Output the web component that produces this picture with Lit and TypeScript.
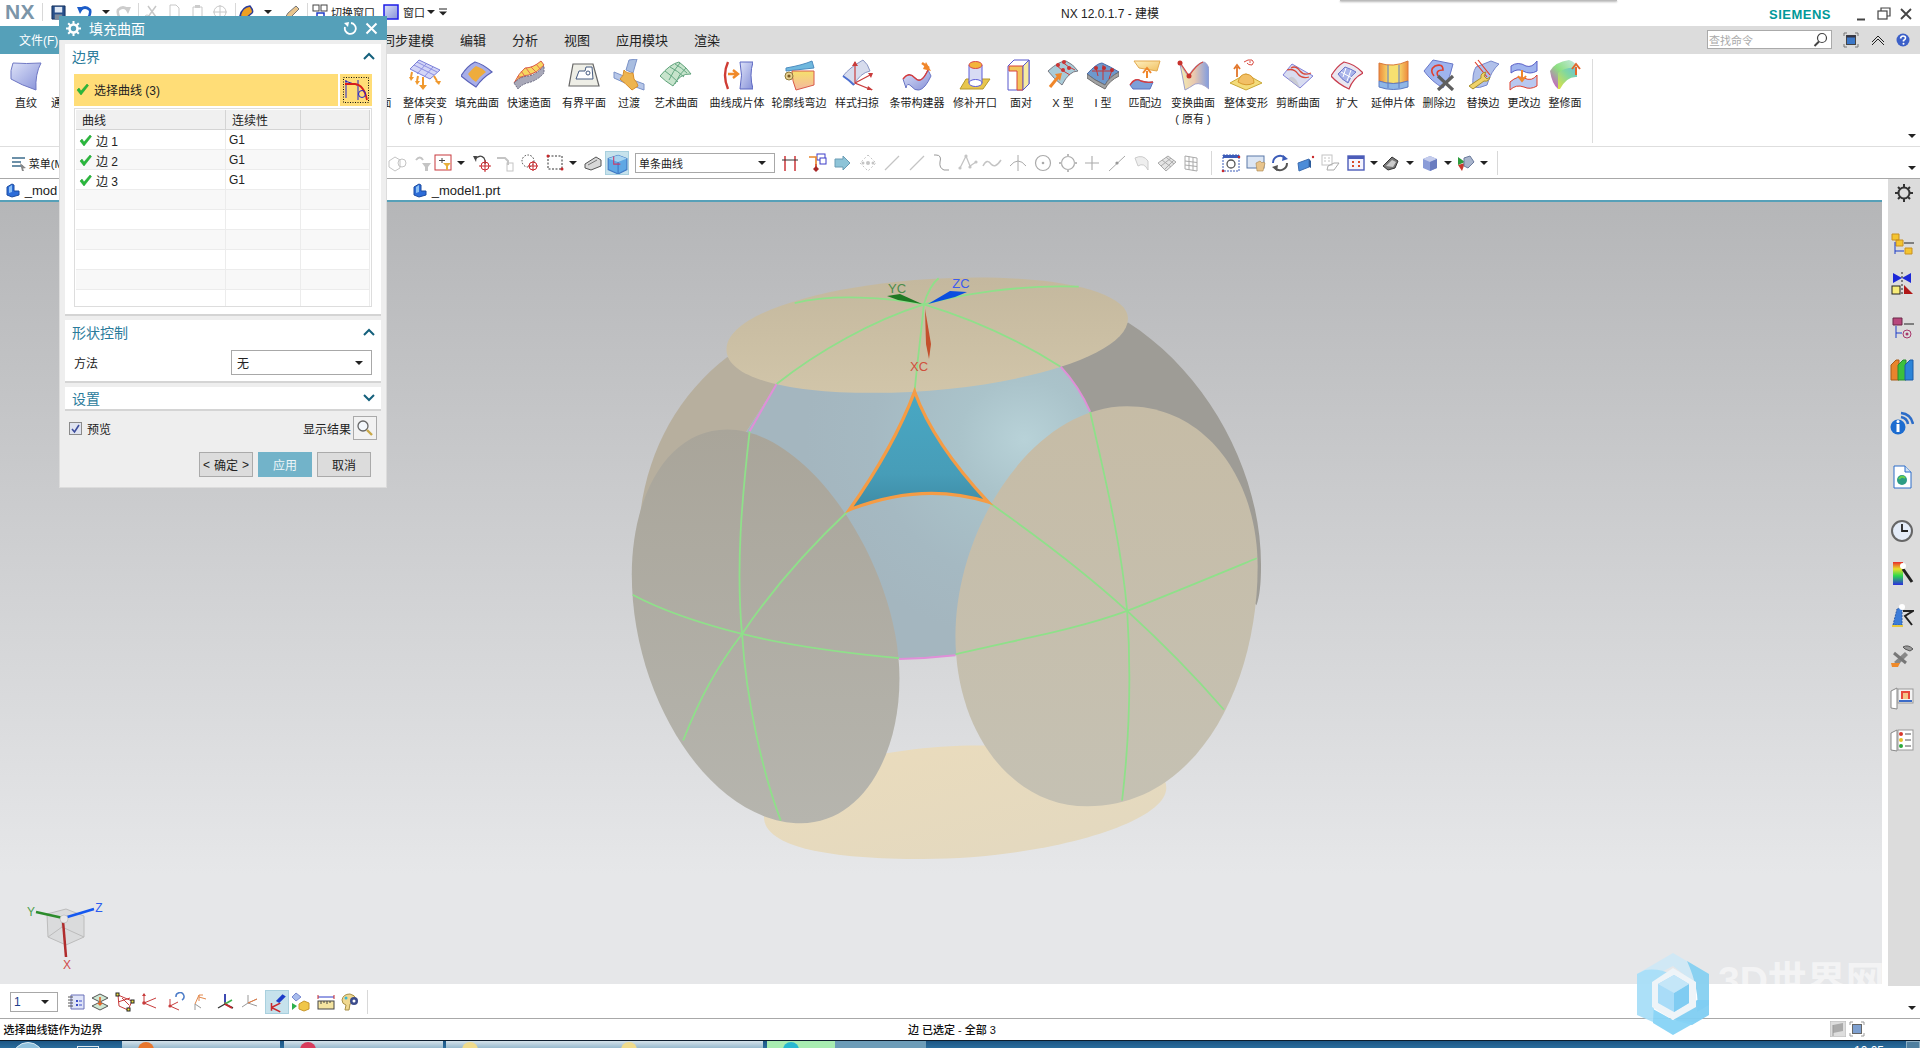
import { LitElement, html, css, svg } from "lit";
import { customElement } from "lit/decorators.js";

type Slot = { c: number; w: number; t: unknown };

// flex row whose children sit at given centre x values
function row(items: Slot[]) {
  let right = 0;
  return items.map((it) => {
    const left = it.c - it.w / 2;
    const m = left - right;
    right = left + it.w;
    return html`<div class="slot" style="margin-left:${m}px;width:${it.w}px">${it.t}</div>`;
  });
}

const box = (size: number, vb: number, body: unknown) =>
  html`<svg class="ic" width=${size} height=${size} viewBox="0 0 ${vb} ${vb}">${body}</svg>`;
const dd = html`<span class="dd"></span>`;
const sep = html`<span class="vsep"></span>`;

/* ---------- ribbon icons, 32 box ---------- */
const rib = {
  ruled: svg`<path d="M3 4Q16 5 31 4Q25 15 26 31Q11 26 1 20Q0 11 3 4Z" fill="url(#gb)" stroke="#6f78c4"/>`,
  global: svg`<path d="M1 10L10 1L31 11L21 20Z" fill="#d3d5f7" stroke="#7a7fd8"/><path d="M8 3L28 13M5 6L25 16M17 5L8 15M24 8L15 18" stroke="#8d90e2" fill="none"/><path d="M3 13L2 18M14 18V27M25 17L28 22M9 17L8 22" stroke="#f0992e" stroke-width="2" fill="none"/><path d="M0 18h5l-3 4zM10 26h8l-4 5zM26 22h6l-2 4zM6 22h5l-3 4z" fill="#f0992e"/>`,
  fill: svg`<path d="M0 17Q6 7 14 3Q22 5 31 13Q21 19 15 28Q7 23 0 17Z" fill="#a8aee8" stroke="#5a62b8" stroke-width="1.200"/><path d="M7 15Q12 9 15 7Q21 9 25 13Q19 17 15 23Q10 20 7 15Z" fill="#eeac3c"/>`,
  quick: svg`<path d="M1 24Q8 16 16 16Q24 14 31 6L28 2Q20 9 12 9Q6 14 1 24Z" fill="#f6d660" stroke="#d85a4a"/><path d="M8 12L14 20M13 9L19 17M18 8L24 14M23 5L28 11M4 18H25" stroke="#e6674e" fill="none"/><path d="M1 24Q8 17 16 17Q24 15 31 7L31 14Q24 22 14 24Q8 26 5 30Z" fill="#a8a8b8" stroke="#6d6d84" stroke-dasharray="2 1"/>`,
  bounded: svg`<path d="M5 5H25L31 27H1Z" fill="#eeeee6" stroke="#666" stroke-width="1.200"/><path d="M8 20L11 12H17L18 8H24L25 20Z" fill="#fff" stroke="#455a80"/><circle cx="20" cy="14" r="2" fill="none" stroke="#455a80"/>`,
  blend: svg`<path d="M1 13L13 18L12 24L1 19Z" fill="#b7c7e8" stroke="#7c93c8"/><path d="M20 21L31 25V31L20 27Z" fill="#b7c7e8" stroke="#7c93c8"/><path d="M16 1L24 0L20 14L13 11Z" fill="#a8bde0" stroke="#7c93c8"/><path d="M11 11Q14 15 20 14L21 20Q24 23 25 27L19 31Q12 24 7 20Q11 17 11 11Z" fill="#edb44f" stroke="#d88c28"/>`,
  studio: svg`<path d="M0 17Q10 5 19 3Q27 9 31 15Q20 14 13 27Q5 22 0 17Z" fill="#c7e4cc" stroke="#5fa27a"/><path d="M5 12Q12 17 18 23M10 8Q18 12 24 18M15 5Q22 9 27 14M9 21Q13 12 20 4M15 25Q19 15 26 9" stroke="#64a882" fill="none"/>`,
  cloth: svg`<path d="M7 3Q1 16 7 30" fill="none" stroke="#cf3c34" stroke-width="2.400"/><path d="M7 15h8M12 11l5 4-5 4" stroke="#f08a2a" stroke-width="2.400" fill="none"/><path d="M19 3H32Q28 16 32 30H19Q22 16 19 3Z" fill="url(#gb)" stroke="#5d68c2"/>`,
  flange: svg`<path d="M3 9Q20 6 29 2L31 9L3 12Z" fill="#6fb8de" stroke="#4d8cc0"/><path d="M9 12H31V26L13 31Q9 22 9 12Z" fill="url(#gy)" stroke="#d85a4a"/><circle cx="6" cy="17" r="4" fill="#e8d090" stroke="#8e7a3a"/><circle cx="6" cy="17" r="1.600" fill="#7a5a24"/>`,
  styled: svg`<path d="M2 17Q8 9 22 1Q27 5 29 12Q19 14 13 26Q7 20 2 17Z" fill="#d7dced" stroke="#8a96c4"/><path d="M2 17Q8 21 13 26" stroke="#4c6fd0" stroke-width="2" fill="none"/><path d="M14 3V24L31 31M14 24L31 15" stroke="#c93c3c" stroke-width="1.200" fill="none"/><path d="M11 7l3-5 3 5zM27 14l5 0-2 5zM27 27l5 4-6 0z" fill="#c93c3c"/>`,
  strip: svg`<path d="M2 20Q8 12 14 19Q20 26 27 11L30 17Q24 30 18 31Q14 32 10 27Q6 23 5 29Z" fill="url(#gb)" stroke="#6a76c4"/><path d="M2 20Q8 12 14 19Q20 26 27 11" stroke="#d83c3c" stroke-width="1.400" fill="none"/><path d="M21 4L28 9" stroke="#f0862a" stroke-width="2.500"/><path d="M25 3L30 12L22 10Z" fill="#f0862a"/>`,
  patch: svg`<path d="M7 20H31L24 30H1Z" fill="#e8c64e" stroke="#b89a2a"/><path d="M10 6V24H23V6" fill="#d8dcf4" stroke="#5d5dd8"/><ellipse cx="16.500" cy="24" rx="6.500" ry="3.500" fill="#fff" stroke="#5d5dd8"/><ellipse cx="16.500" cy="6" rx="6.500" ry="3.500" fill="#f3b43a" stroke="#d84a4a"/>`,
  facing: svg`<path d="M3 7L9 1H24V25L18 31H3Z" fill="none" stroke="#5757cc"/><path d="M4 7H18V31H12V12H4Z" fill="#f1c65c" stroke="#d8433c"/><path d="M18 7L24 1V25L18 31Z" fill="#f7eaa0" stroke="#5757cc"/>`,
  xform: svg`<path d="M1 12Q12 2 19 2Q26 5 31 12Q22 12 15 26Q7 20 1 12Z" fill="#a8cbd8" stroke="#7a7a84"/><path d="M9 6Q15 12 23 16M15 3Q21 8 28 11" stroke="#c83c3c" fill="none"/><circle cx="11" cy="6" r="2" fill="#cc3434"/><circle cx="17" cy="3" r="2" fill="#cc3434"/><circle cx="16" cy="11" r="2" fill="#cc3434"/><circle cx="22" cy="9" r="2" fill="#cc3434"/><path d="M3 28L12 17" stroke="#f0862a" stroke-width="3"/><path d="M8 15L15 14L13 22Z" fill="#f0862a"/>`,
  iform: svg`<path d="M0 15Q10 4 15 4Q24 8 32 13Q22 18 18 26Q7 21 0 15Z" fill="#6e98cc" stroke="#4c6aa8"/><path d="M0 15V19Q8 25 18 30Q22 22 32 17V13Q22 18 18 26Q7 21 0 15Z" fill="#a2a2a2" stroke="#6f6f6f"/><path d="M9 9L11 17M16 6L16 21M25 11L22 20M5 12L26 12" stroke="#c83434" fill="none"/><circle cx="9" cy="9" r="2" fill="#c02e2e"/><circle cx="17" cy="9" r="2" fill="#c02e2e"/><circle cx="25" cy="11" r="2" fill="#c02e2e"/>`,
  match: svg`<path d="M5 2H31L28 12L10 9Z" fill="url(#gy2)" stroke="#e2a950"/><path d="M18 19V12M14 14l4-5 4 5" stroke="#f0862a" stroke-width="2" fill="none"/><path d="M1 26Q6 18 12 22Q20 24 24 23L21 30H4Z" fill="#7d9fd8" stroke="#5a70c0"/><path d="M1 26Q6 18 12 22Q18 24 24 23" stroke="#d83c3c" stroke-width="1.400" fill="none"/>`,
  trans: svg`<path d="M3 5L11 17Q20 4 26 3Q30 3 32 10V30Q24 23 18 25Q12 29 8 31Q6 20 3 5Z" fill="url(#gyb)" stroke="#a0a0c8"/><path d="M4 5L12 17Q20 5 26 3" stroke="#d8463c" stroke-width="1.200" fill="none"/><circle cx="3" cy="4" r="2.500" fill="#c8322c"/><circle cx="12" cy="17" r="2.500" fill="#c8322c"/>`,
  deform: svg`<path d="M0 24L16 15L32 24L16 31Z" fill="#f4dc7a" stroke="#c8a838"/><path d="M8 23Q10 15 16 15Q24 16 24 24Q16 28 8 23Z" fill="#f2c066" stroke="#d89a2e"/><path d="M7 18V8M4 10l3-4 3 4" stroke="#e2762a" stroke-width="1.800" fill="none"/><path d="M14 3Q18 0 22 1Q25 3 22 6Q18 6 17 4" fill="none" stroke="#d8463c"/><circle cx="20" cy="3" r=".8" fill="#d8463c"/>`,
  trim: svg`<path d="M1 16L10 5L31 17L18 29Z" fill="#d8dcf0" stroke="#8080d8"/><path d="M9 9Q14 6 18 12Q22 17 29 14" fill="none" stroke="#d84a3c" stroke-width="1.300"/><path d="M5 11Q12 9 16 15Q20 20 27 18" fill="none" stroke="#d84a3c" stroke-width="1.300"/><path d="M6 20Q12 13 18 29" fill="#c0c0c0" opacity=".6"/>`,
  enlarge: svg`<path d="M0 17Q6 7 13 3Q24 5 32 14Q22 19 18 30Q7 25 0 17Z" fill="#eae6f0" stroke="#c83c4c" stroke-width="1.200"/><path d="M7 15Q12 10 14 8Q20 10 25 13Q19 17 17 24Q10 20 7 15Z" fill="#a9b4ea" stroke="#6a74c8"/><path d="M10 13L21 19M15 9L12 18M20 11L16 22" stroke="#fff" fill="none"/>`,
  extend: svg`<path d="M2 4Q16 9 31 2V22Q16 27 2 22Z" fill="url(#gor)" stroke="#d8783a"/><path d="M2 22Q16 27 31 22V28Q16 33 2 28Z" fill="#8fb6e6" stroke="#5d7cc4"/><path d="M11 6V29M22 6V29" stroke="#5d7cc4" fill="none"/>`,
  delEdge: svg`<path d="M1 12L10 1L30 5Q28 18 20 29Q8 22 1 12Z" fill="#9fb4ee" stroke="#6a78c8"/><path d="M11 17Q6 11 12 7Q20 4 20 11Q12 11 15 17" fill="none" stroke="#e0402e" stroke-width="1.600"/><path d="M15 17L30 31M30 17L15 31" stroke="#5f5f5f" stroke-width="3.200"/>`,
  repEdge: svg`<path d="M6 28Q5 14 9 8L24 2L32 5Q24 12 20 26Q12 30 6 28Z" fill="#b0c0ea" stroke="#7888cc"/><path d="M11 1L23 16M8 3L20 18" stroke="#e0402e" stroke-width="1.200"/><path d="M2 27L6 30L17 22Q22 23 23 18L20 20L17 17L19 13Q13 14 14 19Z" fill="#f0d36a" stroke="#a88f2c"/>`,
  chgEdge: svg`<path d="M3 7Q10 2 18 7Q24 9 29 2V12Q22 16 15 12Q9 9 3 14Z" fill="#9fb4ee" stroke="#5a60c8"/><path d="M2 23Q10 16 16 19Q24 23 29 16V27Q22 31 16 28Q8 25 2 31Z" fill="#b8c8f0" stroke="#e0402e"/><path d="M14 11V20M10 17l4 5 4-5" stroke="#f0862a" stroke-width="2" fill="none"/>`,
  retrim: svg`<path d="M1 12Q6 3 20 1Q27 3 28 9L10 14L9 30Q3 25 1 12Z" fill="url(#grb)"/><path d="M9 14Q16 8 28 9V18Q18 17 11 30L9 30Z" fill="url(#grn)"/><path d="M27 16V8M23 10l4-5 4 5" stroke="#e2662a" stroke-width="2" fill="none"/>`,
};

const ribbon: [number, string, unknown, string?][] = [
  [26, "直纹", rib.ruled],
  [62, "通过", ""], // its icon sits behind the dialog
  [371, "N边曲面", rib.fill],
  [425, "整体突变", rib.global, "( 原有 )"],
  [477, "填充曲面", rib.fill],
  [529, "快速造面", rib.quick],
  [584, "有界平面", rib.bounded],
  [629, "过渡", rib.blend],
  [676, "艺术曲面", rib.studio],
  [737, "曲线成片体", rib.cloth],
  [799, "轮廓线弯边", rib.flange],
  [857, "样式扫掠", rib.styled],
  [917, "条带构建器", rib.strip],
  [975, "修补开口", rib.patch],
  [1021, "面对", rib.facing],
  [1063, "X 型", rib.xform],
  [1103, "I 型", rib.iform],
  [1145, "匹配边", rib.match],
  [1193, "变换曲面", rib.trans, "( 原有 )"],
  [1246, "整体变形", rib.deform],
  [1298, "剪断曲面", rib.trim],
  [1347, "扩大", rib.enlarge],
  [1393, "延伸片体", rib.extend],
  [1439, "删除边", rib.delEdge],
  [1483, "替换边", rib.repEdge],
  [1524, "更改边", rib.chgEdge],
  [1565, "整修面", rib.retrim],
];

/* ---------- small toolbar icons, 20 box ---------- */
const G = "#c4c4c4";
const tb = {
  boxOff: svg`<path d="M2 8L8 4L13 7V15L8 18L2 14Z" fill="none" stroke="${G}"/><circle cx="15" cy="10" r="4" fill="none" stroke="${G}"/>`,
  funnelOff: svg`<path d="M3 7Q7 2 10 7" fill="none" stroke="${G}" stroke-width="2"/><path d="M9 10H18L15 14V18H12V14Z" fill="${G}"/>`,
  redBox: svg`<rect x="1" y="2" width="16" height="15" fill="#fff" stroke="#c8383c"/><path d="M8 5V10M5 7.500H11" stroke="#444"/><path d="M9 10H17L14 13V17H12V13Z" fill="#e8b03c"/>`,
  undoX: svg`<path d="M3 6Q8 1 12 5Q14 8 13 11" fill="none" stroke="#444" stroke-width="1.300"/><path d="M1 3L5 3L4 9Z" fill="#444"/><circle cx="13" cy="13" r="4" fill="none" stroke="#c8282c"/><path d="M13 7V19M7 13H19" stroke="#c8282c"/>`,
  gearOff: svg`<path d="M2 5H10L13 8V12" fill="none" stroke="${G}" stroke-width="2"/><rect x="12" y="10" width="6" height="8" fill="none" stroke="${G}"/>`,
  dotX: svg`<circle cx="8" cy="8" r="6" fill="none" stroke="#444" stroke-dasharray="1.500 1.500"/><circle cx="13" cy="13" r="4" fill="none" stroke="#c8282c"/><path d="M13 8V18M8 13H18" stroke="#c8282c"/>`,
  dashRect: svg`<rect x="3" y="3" width="14" height="13" fill="none" stroke="#333" stroke-dasharray="2 1.500"/><circle cx="3" cy="3" r="1.500" fill="#c8282c"/><circle cx="17" cy="16" r="1.500" fill="#c8282c"/>`,
  cham: svg`<path d="M2 11L13 4L18 7V13L8 17L2 15Z" fill="#d8d8d8" stroke="#555"/><path d="M5 12L14 7" stroke="#777"/>`,
  cube: svg`<path d="M2 6L11 3L19 6V16L11 20L2 16Z" fill="#5fa8e4" stroke="#3f78c4"/><path d="M2 6L11 9L19 6L11 3Z" fill="#a8d4f0"/><path d="M11 9V20" stroke="#3f78c4"/><path d="M7 4V11H13" stroke="#c83c6c" fill="none"/>`,
  hBar: svg`<path d="M5 3V18M15 3V18" stroke="#c8282c" stroke-width="1.400"/><path d="M2 7H18" stroke="#333"/>`,
  flow: svg`<rect x="10" y="1" width="8" height="6" fill="#fff" stroke="#3c3cc8"/><rect x="13" y="5" width="6" height="6" fill="#fff" stroke="#3c3cc8"/><path d="M2 4H9L9 15" stroke="#e8842a" stroke-width="1.600" fill="none"/><path d="M9 11V18" stroke="#c8282c"/><path d="M9 13L12 16L9 19L6 16Z" fill="#a82828"/>`,
  arrow: svg`<path d="M3 6H11V3L18 10L11 17V14H3Z" fill="#8ec4d8" stroke="#6a9cb4"/>`,
  dotsOff: svg`<path d="M10 2L18 10L10 18L2 10Z" fill="none" stroke="${G}" stroke-dasharray="2 2"/><circle cx="10" cy="10" r="2" fill="${G}"/><circle cx="5" cy="10" r="1.500" fill="${G}"/><circle cx="15" cy="10" r="1.500" fill="${G}"/>`,
  lineOff: svg`<path d="M3 17L17 3" stroke="${G}" stroke-width="1.300"/>`,
  sOff: svg`<path d="M5 2Q11 2 9 9Q8 15 13 17H18" fill="none" stroke="#999"/><path d="M5 2L3 2" stroke="#999"/>`,
  polyOff: svg`<path d="M2 15L8 3L12 13L18 9" fill="none" stroke="${G}" stroke-width="1.300"/><circle cx="8" cy="3" r="1.600" fill="${G}"/><circle cx="12" cy="14" r="1.600" fill="${G}"/><circle cx="18" cy="9" r="1.600" fill="${G}"/><circle cx="2" cy="15" r="1.600" fill="${G}"/>`,
  waveOff: svg`<path d="M1 13Q5 5 9 11Q13 16 19 7" fill="none" stroke="${G}" stroke-width="1.500"/>`,
  arcOff: svg`<path d="M10 2V18M2 13Q10 3 18 13" fill="none" stroke="#aaa"/>`,
  circOff: svg`<circle cx="10" cy="10" r="7.500" fill="none" stroke="#aaa" stroke-width="1.200"/><circle cx="10" cy="10" r="1.300" fill="#aaa"/>`,
  ringOff: svg`<circle cx="10" cy="10" r="6.500" fill="none" stroke="#aaa" stroke-width="1.200"/><path d="M10 1V4M10 16V19M1 10H4M16 10H19" stroke="#bbb" stroke-width="2"/>`,
  plusOff: svg`<path d="M10 3V17M3 10H17" stroke="#aaa" stroke-width="1.100"/>`,
  lineDot: svg`<path d="M2 18L18 3" stroke="#aaa"/><circle cx="10" cy="10" r="1.600" fill="#999"/>`,
  curveOff: svg`<path d="M4 5Q12 1 17 8V17Q13 9 7 13Z" fill="#eee" stroke="#ccc"/>`,
  meshOff: svg`<path d="M1 10L11 3L19 9L9 18Z" fill="#e4e4e4" stroke="#aaa"/><path d="M5 7L14 14M9 4L17 11M4 13L14 5M8 16L17 7" stroke="#aaa"/>`,
  gridOff: svg`<path d="M4 3L16 5V18L4 16Z" fill="none" stroke="#aaa"/><path d="M8 3.500V17M12 4.200V17.500M4 8L16 9.500M4 12L16 13.500" stroke="#aaa"/>`,
  sepZoom: svg`<rect x="2" y="2" width="16" height="16" fill="#fff" stroke="#3c5cb8" stroke-dasharray="2 1"/><rect x="2" y="2" width="16" height="3" fill="#3c5cb8"/><circle cx="10" cy="11" r="4" fill="none" stroke="#555" stroke-width="1.300"/><circle cx="2" cy="18" r="1.300" fill="#c8282c"/><circle cx="18" cy="4" r="1.300" fill="#c8282c"/>`,
  pan: svg`<rect x="1" y="3" width="17" height="12" fill="#dce6f4" stroke="#5a78a8"/><path d="M10 10L11 18H17L19 10L17 9L16 10L14 8L12 9Z" fill="#e8c48c" stroke="#a8844c" stroke-width=".6"/>`,
  rotate: svg`<path d="M3 10A7 7 0 0 1 15 5" fill="none" stroke="#3c5cb8" stroke-width="2"/><path d="M17 10A7 7 0 0 1 5 15" fill="none" stroke="#555" stroke-width="2"/><path d="M13 2L18 6L12 8Z" fill="#3c5cb8"/><path d="M7 18L2 14L8 12Z" fill="#555"/>`,
  persp: svg`<path d="M2 10L13 6V14L3 18Z" fill="#4c8cd8" stroke="#3c6cb0"/><path d="M13 6L15 8V15L13 14Z" fill="#2c5c9c"/><circle cx="17" cy="4" r="1.200" fill="#c8282c"/>`,
  tblOff: svg`<rect x="2" y="2" width="10" height="10" fill="none" stroke="${G}"/><path d="M4 5H6M8 5H10M4 8H6M8 8H10" stroke="${G}"/><path d="M8 13L14 10H19L14 17H7Z" fill="none" stroke="#aaa"/>`,
  layout: svg`<rect x="2" y="3" width="16" height="14" fill="#f4f4ff" stroke="#4c5cb8" stroke-width="1.400"/><rect x="2" y="3" width="16" height="3" fill="#4c5cb8"/><path d="M6 8h2v2h-2zM12 8h2v2h-2zM6 12h2v2h-2zM12 12h2v2h-2z" fill="#d84a2c"/>`,
  shade: svg`<path d="M1 13L10 4L16 8L13 15L6 17Z" fill="#777" stroke="#333"/><path d="M4 13L10 7L14 9L11 14Z" fill="#ccc"/>`,
  cubeB: svg`<path d="M3 6L10 3L17 6V15L10 18L3 15Z" fill="#8a9cd8"/><path d="M3 6L10 9L17 6L10 3Z" fill="#c4ccec"/><path d="M10 9L17 6V15L10 18Z" fill="#6a7cc0"/>`,
  play: svg`<path d="M2 4L9 9L2 12Z" fill="#2c9c3c"/><path d="M2 12L9 10L6 18Z" fill="#c8382c"/><path d="M8 5L14 3L18 9L12 15L8 13Z" fill="#a8b4cc" stroke="#6a7a9c"/>`,
};

const tools: Slot[] = [
  [397, tb.boxOff], [423, tb.funnelOff], [444, tb.redBox], [482, tb.undoX], [505, tb.gearOff],
  [530, tb.dotX], [555, tb.dashRect], [593, tb.cham],
].map(([c, b]) => ({ c: c as number, w: 22, t: box(20, 20, b) }));

const toolsB: [number, unknown][] = [
  [790, tb.hBar], [817, tb.flow], [842, tb.arrow], [868, tb.dotsOff], [892, tb.lineOff],
  [917, tb.lineOff], [941, tb.sOff], [968, tb.polyOff], [992, tb.waveOff], [1018, tb.arcOff],
  [1043, tb.circOff], [1068, tb.ringOff], [1092, tb.plusOff], [1117, tb.lineDot], [1141, tb.curveOff],
  [1167, tb.meshOff], [1191, tb.gridOff],
];
const toolsC: [number, unknown][] = [
  [1231, tb.sepZoom], [1256, tb.pan], [1280, tb.rotate], [1306, tb.persp], [1330, tb.tblOff],
  [1356, tb.layout],
];

const bottomIcons: [number, unknown][] = [
  [76, svg`<path d="M5 3H18V17H5Z" fill="#dfe4f8" stroke="#6a70b8"/><path d="M2 5H7M2 8H7M2 11H7M2 14H7" stroke="#555"/><path d="M10 8h2v2h-2zM10 12h2v2h-2z" fill="#3c4cc8"/><path d="M13 9h3M13 13h3" stroke="#3c4cc8"/>`],
  [100, svg`<path d="M2 6L10 2L18 6L10 10Z" fill="#cfe8d4" stroke="#555"/><path d="M2 14L10 10L18 14L10 18Z" fill="#cfe8d4" stroke="#555"/><path d="M10 5V12" stroke="#e2662a" stroke-width="1.600"/><path d="M7 11H13L10 14Z" fill="#e2662a"/>`],
  [125, svg`<path d="M3 3L17 9L13 18L4 14Z" fill="none" stroke="#c83c3c"/><path d="M7 6L14 13M3 10L15 6" stroke="#c83c3c"/><rect x="1" y="1" width="3" height="3" fill="#f0e040" stroke="#222"/><rect x="16" y="8" width="3" height="3" fill="#f0e040" stroke="#222"/><rect x="12" y="16" width="3" height="3" fill="#f0e040" stroke="#222"/>`],
  [149, svg`<path d="M5 2V11M5 11L17 6M5 11L17 16" stroke="#c83c3c" fill="none"/><path d="M3 4L5 1L7 4Z" fill="#c83c3c"/><circle cx="5" cy="11" r="1.800" fill="#c83c3c"/>`],
  [175, svg`<path d="M5 7V14M5 14L13 10M5 14L14 18" stroke="#c83c3c" fill="none"/><circle cx="5" cy="14" r="1.600" fill="#c83c3c"/><path d="M11 5A4 4 0 1 1 17 8" fill="none" stroke="#4c7cc8" stroke-width="1.500"/>`],
  [200, svg`<path d="M5 12V18M5 12L11 16" stroke="#999" fill="none"/><path d="M5 12L9 3H13M9 3V9M9 5L16 7" stroke="#e2884c" fill="none"/>`],
  [225, svg`<path d="M10 2V12M10 12L3 16M10 12L18 16" fill="none" stroke-width="1.400" stroke="#333"/><path d="M10 2V10" stroke="#2c3cc8" stroke-width="1.500"/><path d="M10 12L17 8" stroke="#3cb04c" stroke-width="1.500"/><path d="M10 12L17 16" stroke="#c8282c" stroke-width="2"/>`],
  [250, svg`<path d="M8 3V11M8 11L2 15M8 11L17 7M8 11L17 14" stroke="#999" fill="none"/><path d="M8 11L17 7" stroke="#e8783c"/>`],
  [300, svg`<path d="M6 1L11 5L6 9L2 5Z" fill="#a8bcec" stroke="#7888d0"/><path d="M2 11L7 14L2 18Z" fill="#2cb04c"/><path d="M9 12L14 9L19 11V17L14 19L9 17Z" fill="#f0c648" stroke="#c8982c"/>`],
  [326, svg`<rect x="2" y="9" width="16" height="8" fill="#f4e4a0" stroke="#444"/><path d="M5 9V12M8 9V11M11 9V12M14 9V11" stroke="#444"/><path d="M2 5H18" stroke="#2c3cc8"/><path d="M2 3V7M18 3V7" stroke="#c8282c"/>`],
  [350, svg`<path d="M2 8Q3 2 10 2Q15 3 16 7Q13 12 10 12L9 18H5L6 13Q2 12 2 8Z" fill="#f0d890" stroke="#a89048"/><circle cx="14" cy="9" r="4" fill="#3c4c8c"/><circle cx="14" cy="9" r="1.500" fill="#fff"/><circle cx="6" cy="6" r="1.500" fill="#38b8d8"/>`],
];

/* right rail: [gap above, icon body] */
const rail: [number, unknown][] = [
  [2, svg`<circle cx="14" cy="12" r="5.500" fill="none" stroke="#333" stroke-width="2"/><path d="M14 3v3M14 18v3M5 12h3M20 12h3M8 6l2 2M18 16l2 2M20 6l-2 2M10 16l-2 2" stroke="#333" stroke-width="2"/>`],
  [27, svg`<path d="M2 2H9V8H2ZM6 8H13V14H6Z" fill="#f4c430" stroke="#c89020"/><path d="M15 16H22V22H15Z" fill="#f4c430" stroke="#c89020"/><path d="M5 10V22M5 19H14" stroke="#1c3cc8" fill="none"/><path d="M14 11H24" stroke="#222"/>`],
  [15, svg`<path d="M3 2L12 7L21 2V12L12 7L3 12Z" fill="#1c28d8"/><path d="M12 1V24" stroke="#222" stroke-dasharray="2 2"/><rect x="2" y="15" width="8" height="8" fill="#f8ec78" stroke="#222"/><path d="M14 14L23 23H14Z" fill="#b01818"/>`],
  [21, svg`<path d="M3 2H12V9H3Z" fill="#b8487c" stroke="#6a2848"/><path d="M6 10V22M6 17H12" stroke="#1c3cc8" fill="none"/><path d="M14 8H24" stroke="#222"/><circle cx="17" cy="18" r="4" fill="none" stroke="#a8386c"/><circle cx="17" cy="18" r="1.500" fill="#a8386c"/>`],
  [18, svg`<path d="M1 7L6 2H9V22H1Z" fill="#e8842c" stroke="#a85c18"/><path d="M8 7L13 2H16V22H8Z" fill="#3cc03c" stroke="#2c8c2c"/><path d="M15 7L20 2H23V22H15Z" fill="#2c84d8" stroke="#1c5ca8"/>`],
  [29, svg`<path d="M11 6Q17 7 18 13M11 2Q21 3 23 13" fill="none" stroke="#2c6cc8" stroke-width="2.500"/><circle cx="8" cy="16" r="7.500" fill="#1c6cd0"/><path d="M6.500 13h3v8h-3z" fill="#fff"/><circle cx="8" cy="10.500" r="1.500" fill="#fff"/>`],
  [30, svg`<path d="M4 1H15L21 7V23H4Z" fill="#fff" stroke="#2c6cc8"/><path d="M15 1V7H21" fill="#cfe0f4" stroke="#2c6cc8"/><circle cx="12" cy="15" r="5" fill="#2c9c84"/><path d="M9 14Q12 10 15 13" stroke="#6cd04c" stroke-width="2" fill="none"/>`],
  [30, svg`<circle cx="12" cy="12" r="10" fill="#e4ecf8" stroke="#666" stroke-width="2"/><path d="M12 5V12H18" stroke="#222" stroke-width="1.800" fill="none"/>`],
  [18, svg`<rect x="3" y="1" width="10" height="23" fill="url(#grain)"/><path d="M13 8L22 21" stroke="#222" stroke-width="3"/><circle cx="13" cy="5" r="3" fill="#fff"/>`],
  [18, svg`<path d="M3 22L7 6L12 4V22Z" fill="#3c7cd8" stroke="#2c5ca8" stroke-dasharray="2 1"/><path d="M2 23H13" stroke="#e8c83c" stroke-width="2"/><path d="M13 8H23L15 13L22 22" fill="none" stroke="#222" stroke-width="2"/><circle cx="12" cy="4" r="3" fill="#fff"/>`],
  [16, svg`<path d="M4 19L15 9L18 12L8 22Z" fill="#888"/><path d="M13 4Q18 1 23 6L20 8L15 6Z" fill="#999" stroke="#555"/><path d="M1 20H10L8 24H2Z" fill="#f08a2a"/><path d="M4 10L16 20" stroke="#777" stroke-width="3"/>`],
  [19, svg`<path d="M1 5L7 2V23L1 22Z" fill="#fff" stroke="#888"/><rect x="8" y="3" width="15" height="14" fill="#f4f4f4" stroke="#999"/><path d="M11 5H20V13H11Z" fill="#e8483c"/><path d="M13 7H18V13H13Z" fill="#f4c488"/><path d="M9 15H22" stroke="#3c6cc8" stroke-width="2"/>`],
  [18, svg`<path d="M1 5L7 2V23L1 22Z" fill="#fff" stroke="#888"/><rect x="8" y="2" width="15" height="20" fill="#fff" stroke="#999"/><circle cx="11" cy="6" r="2" fill="#d8382c"/><circle cx="11" cy="12" r="2" fill="#e8c02c"/><circle cx="11" cy="18" r="2" fill="#2ca83c"/><path d="M15 6H21M15 12H21M15 18H21" stroke="#555"/>`],
];

const check = html`<svg class="ic" width="13" height="13" viewBox="0 0 13 13"><path d="M1 7L3 5L5 8L11 1L12.500 2.500L5 12Z" fill="#28b83c" stroke="#1c9c2c" stroke-width=".5"/></svg>`;
const chevron = (up: boolean) =>
  html`<svg class="ic" width="12" height="8" viewBox="0 0 12 8"><path d=${up ? "M1 7L6 2L11 7" : "M1 1L6 6L11 1"} fill="none" stroke="#14607c" stroke-width="2"/></svg>`;
const partTab = html`<svg class="ic" width="15" height="15" viewBox="0 0 15 15"><path d="M2 4L7 1L9 2V8L14 8V12L7 14L2 12Z" fill="#2c6cd8" stroke="#1c4ca0"/><path d="M4 4L7 2V9L4 10Z" fill="#8cc0f4"/></svg>`;

const tableRows = [
  ["边 1", "G1"], ["边 2", "G1"], ["边 3", "G1"],
  ["", ""], ["", ""], ["", ""], ["", ""], ["", ""], ["", ""],
];

@customElement("app-root")
export class AppRoot extends LitElement {
  static styles = css`
    :host {
      display: block;
      width: 1920px;
      height: 1048px;
      font-family: "Liberation Sans", "Noto Sans CJK SC", sans-serif;
      font-size: 12px;
      color: #222;
    }
    .page {
      position: relative;
      width: 1920px;
      height: 1048px;
      overflow: hidden;
      background: #fff;
      display: flex;
      flex-direction: column;
    }
    .ic { display: block; }
    .row { display: flex; align-items: center; flex: none; }
    .slot {
      flex: none;
      display: flex;
      justify-content: center;
      align-items: center;
      white-space: nowrap;
    }
    .dd {
      display: block;
      width: 0;
      height: 0;
      border-left: 4px solid transparent;
      border-right: 4px solid transparent;
      border-top: 4px solid #222;
    }
    .vsep { display: block; width: 1px; height: 24px; background: #d8d8d8; }

    .title { height: 26px; padding-bottom: 2px; box-sizing: border-box; }
    .nx { font-size: 21px; font-weight: 700; color: #7b95a8; letter-spacing: .5px; }
    .siemens { font-size: 13px; font-weight: 700; color: #009999; letter-spacing: .5px; margin-top: 4px; }
    .winbtn { margin-top: 3px; }
    .t11 { font-size: 11px; }
    .t12 { font-size: 12px; }

    .menu { height: 28px; background: #dcdcdc; font-size: 13px; color: #222; padding-bottom: 1px; box-sizing: border-box; }
    .filetab {
      height: 28px;
      width: 100%;
      margin-bottom: -1px;
      background: #55a0b9;
      color: #fff;
      font-size: 12px;
      display: flex;
      align-items: center;
      padding: 0 0 2px 19px;
      box-sizing: border-box;
    }
    .search {
      width: 100%;
      height: 19px;
      box-sizing: border-box;
      background: #fff;
      border: 1px solid #aaa;
      color: #aaa;
      font-size: 11px;
      display: flex;
      align-items: center;
      justify-content: space-between;
      padding: 0 3px 0 1px;
    }

    .ribbon {
      height: 93px;
      box-sizing: border-box;
      border-bottom: 1px solid #dedede;
      align-items: flex-start;
      position: relative;
    }
    .ritem {
      flex: none;
      width: 60px;
      display: flex;
      flex-direction: column;
      align-items: center;
      font-size: 11px;
      line-height: 16px;
      padding-top: 5px;
      white-space: nowrap;
    }
    .ritem svg { margin-bottom: 4px; }
    .rsep { flex: none; width: 1px; height: 84px; margin-top: 5px; background: #dcdcdc; }
    .overflow { position: absolute; right: 4px; bottom: 8px; }

    .tools { height: 32px; box-sizing: border-box; border-bottom: 1px solid #a8a8a8; position: relative; }
    .combo {
      box-sizing: border-box;
      background: #fff;
      border: 1px solid #a8a8a8;
      display: flex;
      align-items: center;
      justify-content: space-between;
      padding: 0 8px 0 3px;
      width: 100%;
      height: 20px;
      font-size: 11px;
    }
    .sel { background: #c6e2ec; outline: 1px solid #a9d0de; }

    .work { flex: 1; display: flex; min-height: 0; }
    .main { flex: 1; display: flex; flex-direction: column; min-width: 0; }
    .tabs { height: 21px; flex: none; font-size: 13px; padding-top: 1px; box-sizing: border-box; }
    .tab { display: flex; align-items: center; gap: 5px; }
    .canvas {
      flex: none;
      width: 1882px;
      height: 784px;
      box-sizing: border-box;
      border-top: 2px solid #56a0b8;
      background: linear-gradient(#b5b6b8, #e6e7e9 86%);
    }
    .canvas svg { display: block; }
    .rail {
      flex: none;
      width: 32px;
      box-sizing: border-box;
      padding-right: 4px;
      background: #dcdcdc;
      display: flex;
      flex-direction: column;
      align-items: center;
    }

    .btm { height: 33px; box-sizing: border-box; border-bottom: 1px solid #a8a8a8; position: relative; }
    .status { height: 21px; font-size: 11px; font-weight: 500; color: #111; padding-bottom: 2px; box-sizing: border-box; }

    .taskbar {
      height: 8px;
      flex: none;
      border-top: 1px solid #0c1c2c;
      box-sizing: border-box;
      background: linear-gradient(#1c5684, #2a6c9c);
      display: flex;
      overflow: hidden;
      position: relative;
    }
    .orb {
      position: absolute;
      left: 12px;
      top: 1px;
      width: 32px;
      height: 32px;
      border-radius: 50%;
      background: #8fc0dc;
      border: 1px solid #dcecf4;
      box-sizing: border-box;
    }
    .deskrect {
      position: absolute;
      left: 77px;
      top: 5px;
      width: 22px;
      height: 8px;
      border: 1px solid #dfe8ee;
      box-sizing: border-box;
    }
    .task {
      flex: none;
      height: 8px;
      margin-left: 4px;
      background: linear-gradient(#d4e2ea, #8fb4ca);
      display: flex;
      padding-left: 16px;
      box-sizing: border-box;
    }
    .dot { width: 16px; height: 16px; margin-top: 1px; border-radius: 50%; }
    .clock {
      position: absolute;
      left: 1854px;
      top: 3px;
      color: #fff;
      font-size: 12px;
      line-height: 14px;
    }
    .desk {
      position: absolute;
      right: 0;
      top: 0;
      width: 14px;
      height: 8px;
      background: #4f7f9f;
      border: 1px solid #8fb0c4;
      box-sizing: border-box;
    }

    /* dialog floats over the main window */
    .dialog {
      position: absolute;
      left: 59px;
      top: 16px;
      width: 328px;
      height: 472px;
      box-sizing: border-box;
      background: #eee;
      border: 1px solid #dcdcdc;
      border-top: 0;
      display: flex;
      flex-direction: column;
      font-size: 12px;
    }
    .dtitle {
      height: 24px;
      margin: 0 -1px;
      flex: none;
      background: #55a0b9;
      color: #fff;
      font-size: 14px;
      display: flex;
      align-items: center;
      padding: 0 9px 0 7px;
      gap: 8px;
    }
    .dtitle .grow { flex: 1; }
    .sect {
      background: #fff;
      margin: 4px 5px 0 5px;
      flex: none;
      box-sizing: border-box;
      border-bottom: 2px solid #d4d4d4;
    }
    .shead {
      height: 26px;
      box-sizing: border-box;
      display: flex;
      align-items: center;
      justify-content: space-between;
      padding: 0 6px 2px 7px;
      color: #2a7b9b;
      font-size: 14px;
    }
    .pick { display: flex; gap: 2px; margin: 4px 9px 2px 9px; height: 32px; }
    .pickrow {
      flex: 1;
      background: #ffdd77;
      display: flex;
      align-items: center;
      gap: 5px;
      padding: 0 0 1px 2px;
    }
    .pickbtn {
      width: 32px;
      background: #ffdd77;
      padding: 3px;
      box-sizing: border-box;
    }
    .table {
      margin: 0 9px 7px 9px;
      height: 199px;
      overflow: hidden;
      box-sizing: border-box;
      border: 1px solid #ddd;
      padding: 1px 1px 0 1px;
      display: grid;
      grid-template-columns: 150px 75px 1fr;
      grid-auto-rows: 20px;
    }
    .cell {
      display: flex;
      align-items: center;
      gap: 4px;
      box-sizing: border-box;
      border-bottom: 1px solid #ececec;
      border-right: 1px solid #ececec;
      padding: 1px 0 0 3px;
    }
    .cell.h { background: #f0f0f0; border-bottom: 1px solid #d4d4d4; border-right: 1px solid #d4d4d4; padding: 0 0 0 6px; }
    .cell.odd { background: #f8f8f8; }
    .ctrl {
      display: flex;
      justify-content: space-between;
      align-items: center;
      margin: 4px 9px 6px 9px;
      height: 25px;
    }
    .ctrl .combo { width: 141px; height: 25px; padding-left: 5px; font-size: 12px; }
    .preview {
      display: flex;
      align-items: center;
      justify-content: space-between;
      margin: 5px 9px 0 9px;
      height: 24px;
    }
    .preview .l, .preview .r { display: flex; align-items: center; gap: 5px; }
    .preview .r { gap: 2px; }
    .chk {
      width: 13px;
      height: 13px;
      box-sizing: border-box;
      border: 1px solid #8a8a8a;
      background: #dfe3f0;
    }
    .glass {
      width: 24px;
      height: 24px;
      box-sizing: border-box;
      border: 1px solid #aaa;
      background: #f2f2f2;
      display: flex;
      align-items: center;
      justify-content: center;
    }
    .btns { display: flex; gap: 5px; margin: 12px 0 0 139px; }
    .btn {
      flex: none;
      width: 54px;
      height: 25px;
      box-sizing: border-box;
      background: #dcdcdc;
      border: 1px solid #aaa;
      display: flex;
      align-items: center;
      justify-content: center;
    }
    .btn.ok { justify-content: space-between; padding: 0 3px; }
    .btn.apply { background: #72b3c9; border-color: #72b3c9; color: #eef6f8; }

    .topshadow {
      position: absolute;
      left: 1340px;
      top: 0;
      width: 277px;
      height: 1px;
      background: #bbb;
      box-shadow: 0 1px 2px #999;
    }
    .mark { position: absolute; left: 1636px; top: 952px; }
    .marktext {
      position: absolute;
      left: 1718px;
      top: 958px;
      font-size: 39px;
      line-height: 46px;
      font-weight: 700;
      color: rgba(255, 255, 255, .55);
      white-space: nowrap;
    }
  `;

  private scene() {
    const green = [
      "M722 118C640 100 500 90 415 115", "M722 118C800 95 950 65 1090 72", "M722 118C730 85 745 60 757 50",
      "M722 118C600 160 470 240 372 325", "M722 118C850 160 960 220 1047 280", "M722 118C715 200 705 280 700 345",
      "M308 448C290 620 275 800 290 975", "M290 975C300 1150 340 1340 382 1460", "M30 873C110 920 200 950 290 975",
      "M290 975C400 1005 540 1025 663 1038", "M290 975C360 860 450 750 545 652", "M290 975C230 1060 190 1140 150 1252",
      "M1117 397C1150 560 1190 730 1205 915", "M1205 915C1215 1080 1210 1250 1193 1408", "M797 1028C940 990 1080 965 1205 915",
      "M1205 915C1310 870 1420 820 1513 778", "M875 632C990 720 1110 820 1205 915", "M1205 915C1290 1000 1370 1090 1435 1172",
    ];
    return html`<svg width="1882" height="782" viewBox="0 203 1882 782">
      <defs>
        <linearGradient id="ltop" x1="0" y1="0" x2="0" y2="1"><stop offset="0" stop-color="#c4b89e"/><stop offset="1" stop-color="#d1c5a9"/></linearGradient>
        <linearGradient id="lleft" x1="0" y1="0" x2="0" y2="1"><stop offset="0" stop-color="#a9a59a"/><stop offset="1" stop-color="#b6b5ae"/></linearGradient>
        <linearGradient id="lright" x1="0" y1="0" x2="0" y2="1"><stop offset="0" stop-color="#c6bca6"/><stop offset="1" stop-color="#c5c1b3"/></linearGradient>
        <linearGradient id="lbot" x1="0" y1="0" x2="1" y2="1"><stop offset="0" stop-color="#ebdcbc"/><stop offset="1" stop-color="#e2d8c0"/></linearGradient>
        <linearGradient id="ltri" x1="0" y1="0" x2="0" y2="1"><stop offset="0" stop-color="#49a8c4"/><stop offset=".7" stop-color="#479db8"/><stop offset="1" stop-color="#3d8aa4"/></linearGradient>
        <radialGradient id="lblue" gradientUnits="userSpaceOnUse" cx="960" cy="470" r="520"><stop offset="0" stop-color="#b8d2d8"/><stop offset=".3" stop-color="#aac3ca"/><stop offset=".7" stop-color="#a5b9c2"/><stop offset="1" stop-color="#a4b6bf"/></radialGradient>
      </defs>
      <g transform="translate(620 260) scale(.42088 .3846)">
        <path d="M342 1450C342 1350 600 1265 850 1265C1100 1265 1298 1290 1298 1375C1298 1470 1000 1560 720 1560C500 1560 342 1530 342 1450Z" fill="url(#lbot)"/>
        <path d="M255 255C130 360 55 520 45 700L300 450L372 325Z" fill="#b7af9e"/>
        <path d="M1207 165C1400 300 1525 560 1523 800C1523 840 1520 880 1512 900L1117 397L1047 280Z" fill="#9e9c96"/>
        <path d="M372 325L1047 280Q1090 330 1117 397L1000 1000L797 1030L663 1040L500 1000L300 450Z" fill="url(#lblue)"/>
        <path d="M255 443C110 443 28 620 28 820C28 1150 220 1467 430 1467C570 1467 664 1300 664 1090C664 800 450 443 255 443Z" fill="url(#lleft)"/>
        <path d="M1205 383C980 383 797 700 797 980C797 1230 930 1423 1110 1423C1370 1423 1515 1110 1515 800C1515 570 1390 383 1205 383Z" fill="url(#lright)"/>
        <path d="M253 235C253 130 550 48 850 48C1060 48 1207 90 1207 155C1207 260 900 348 600 348C400 348 253 310 253 235Z" fill="url(#ltop)"/>
        ${green.map((d) => svg`<path d=${d} fill="none" stroke="#8fe08a" stroke-width="1.800" vector-effect="non-scaling-stroke"/>`)}
        <path d="M372 325L308 448M1047 280Q1090 330 1117 397M663 1040Q730 1038 797 1030" fill="none" stroke="#e08fd8" stroke-width="2" vector-effect="non-scaling-stroke"/>
        <path d="M700 345Q745 480 875 632Q720 578 545 652Q650 490 700 345Z" fill="url(#ltri)" stroke="#f59c45" stroke-width="3.200" stroke-linejoin="miter" vector-effect="non-scaling-stroke"/>
      </g>
      <path d="M922 305L900 295L887 297L898 301Z" fill="#1f7a24"/>
      <path d="M928 305L950 292L967 293L955 298Z" fill="#0a4ee0"/>
      <path d="M925 310L926 345L929 360L931 345Z" fill="#c4502c"/>
      <g font-family="Liberation Sans" font-size="13" text-anchor="middle">
        <text x="897" y="294" fill="#4c8c4c">YC</text>
        <text x="961" y="289" fill="#3c5cf0">ZC</text>
        <text x="919" y="372" fill="#d0503c">XC</text>
      </g>
      <g>
        <path d="M47 915L66 910L84 917L84 938L66 946L48 938Z" fill="#d2d3d4" fill-opacity=".6" stroke="#bcbcbc"/>
        <path d="M48 938L62 928L84 938M62 919V928" fill="none" stroke="#bcbcbc"/>
        <path d="M63 919L36 913" stroke="#2c8c2c" stroke-width="2.500"/>
        <path d="M64 919L94 910" stroke="#1458f0" stroke-width="2.500"/>
        <path d="M63 922L66 958" stroke="#b02c2c" stroke-width="2.500"/>
        <circle cx="64" cy="920" r="4" fill="#e8e8e8" stroke="#aaa" stroke-width=".5"/>
        <g font-family="Liberation Sans" font-size="12" text-anchor="middle">
          <text x="31" y="917" fill="#4ca04c">Y</text>
          <text x="99" y="913" fill="#2c5cf0">Z</text>
          <text x="67" y="970" fill="#d04c4c">X</text>
        </g>
      </g>
    </svg>`;
  }

  render() {
    const smallRow = (list: [number, unknown][], size = 20) =>
      list.map(([c, b]) => ({ c, w: 22, t: box(size, 20, b) }));
    return html`
      <svg width="0" height="0" style="position:absolute">
        <defs>
          <linearGradient id="gb" x1="0" y1="0" x2="1" y2="1"><stop offset="0" stop-color="#dde2f8"/><stop offset="1" stop-color="#8590d8"/></linearGradient>
          <linearGradient id="gy" x1="0" y1="0" x2="0" y2="1"><stop offset="0" stop-color="#f6e06c"/><stop offset="1" stop-color="#f4b8a0"/></linearGradient>
          <linearGradient id="gy2" x1="0" y1="0" x2="1" y2="1"><stop offset="0" stop-color="#fff0c0"/><stop offset="1" stop-color="#f0c060"/></linearGradient>
          <linearGradient id="gyb" x1="0" y1="0" x2="1" y2="0"><stop offset="0" stop-color="#f4eeb0"/><stop offset=".5" stop-color="#e8c8b0"/><stop offset="1" stop-color="#7f9ce0"/></linearGradient>
          <linearGradient id="gor" x1="0" y1="0" x2="1" y2="0"><stop offset="0" stop-color="#ee8a3c"/><stop offset=".35" stop-color="#f6e070"/><stop offset=".65" stop-color="#f6e070"/><stop offset="1" stop-color="#ee8a3c"/></linearGradient>
          <linearGradient id="grb" x1="0" y1="1" x2="1" y2="0"><stop offset="0" stop-color="#d83cd8"/><stop offset=".5" stop-color="#8ce080"/><stop offset="1" stop-color="#c8e8e8"/></linearGradient>
          <linearGradient id="grn" x1="0" y1="1" x2="1" y2="0"><stop offset="0" stop-color="#e0e040"/><stop offset=".6" stop-color="#80d8a0"/><stop offset="1" stop-color="#6cc0d8"/></linearGradient>
          <linearGradient id="grain" x1="0" y1="0" x2="0" y2="1"><stop offset="0" stop-color="#e82c2c"/><stop offset=".3" stop-color="#e8e02c"/><stop offset=".6" stop-color="#2cd84c"/><stop offset="1" stop-color="#2c2ce0"/></linearGradient>
        </defs>
      </svg>
      <div class="page">
        <div class="row title">
          ${row([
            { c: 20, w: 36, t: html`<span class="nx">NX</span>` },
            { c: 42, w: 1, t: html`<span class="vsep" style="height:18px"></span>` },
            { c: 58, w: 16, t: box(15, 16, svg`<path d="M1 1H15V15H1Z" fill="#28508c" stroke="#14305c"/><rect x="4" y="2" width="8" height="6" fill="#dfe8f4"/><rect x="4" y="10" width="8" height="5" fill="#7f8c9c"/>`) },
            { c: 85, w: 16, t: box(16, 16, svg`<path d="M3 6Q8 1 13 6Q14 10 11 14" fill="none" stroke="#1c5cc8" stroke-width="2.600"/><path d="M0 3L7 3L3 10Z" fill="#1c5cc8"/>`) },
            { c: 106, w: 8, t: dd },
            { c: 123, w: 16, t: box(16, 16, svg`<path d="M13 6Q8 1 3 6Q2 10 5 14" fill="none" stroke="#ccc" stroke-width="2.600"/><path d="M16 3L9 3L13 10Z" fill="#ccc"/>`) },
            { c: 138, w: 1, t: html`<span class="vsep" style="height:18px"></span>` },
            { c: 152, w: 16, t: box(16, 16, svg`<path d="M4 13L12 2M12 13L4 2" stroke="#c8c8c8" stroke-width="1.500"/><circle cx="3" cy="13" r="2" fill="none" stroke="#c8c8c8"/>`) },
            { c: 175, w: 16, t: box(16, 16, svg`<path d="M3 1H9L12 4V14H3Z" fill="none" stroke="#c8c8c8"/>`) },
            { c: 198, w: 16, t: box(16, 16, svg`<path d="M3 3H12V15H3Z" fill="none" stroke="#c8c8c8"/><rect x="5" y="1" width="5" height="3" fill="#ccc"/>`) },
            { c: 220, w: 16, t: box(16, 16, svg`<circle cx="8" cy="8" r="6" fill="none" stroke="#c8c8c8"/><path d="M8 1V15M1 8H15" stroke="#c8c8c8"/>`) },
            { c: 235, w: 1, t: html`<span class="vsep" style="height:18px"></span>` },
            { c: 247, w: 16, t: box(16, 16, svg`<path d="M1 12Q3 3 11 2Q15 7 13 9L7 14Z" fill="#f0a020" stroke="#2c3c98" stroke-width="1.500"/>`) },
            { c: 268, w: 8, t: dd },
            { c: 292, w: 16, t: box(16, 16, svg`<path d="M1 14L4 9L12 2L15 5L7 13Z" fill="#e8c48c" stroke="#777"/>`) },
            { c: 307, w: 1, t: html`<span class="vsep" style="height:18px"></span>` },
            { c: 320, w: 16, t: box(16, 16, svg`<rect x="1" y="1" width="6" height="6" fill="none" stroke="#444"/><rect x="9" y="1" width="6" height="6" fill="none" stroke="#444"/><rect x="5" y="9" width="7" height="7" fill="none" stroke="#1c3cc8" stroke-width="1.500"/>`) },
            { c: 353, w: 46, t: html`<span class="t11">切换窗口</span>` },
            { c: 391, w: 16, t: box(16, 16, svg`<rect x="1" y="1" width="14" height="14" fill="url(#gb)" stroke="#1c1ce8" stroke-width="1.500"/>`) },
            { c: 414, w: 24, t: html`<span class="t11">窗口</span>` },
            { c: 431, w: 8, t: dd },
            { c: 443, w: 8, t: html`<svg class="ic" width="8" height="8" viewBox="0 0 8 8"><path d="M0 1H8" stroke="#222"/><path d="M0 3.500H8L4 7.500Z" fill="#222"/></svg>` },
            { c: 1110, w: 130, t: html`<span class="t12">NX 12.0.1.7 - 建模</span>` },
            { c: 1800, w: 70, t: html`<span class="siemens">SIEMENS</span>` },
            { c: 1861, w: 10, t: html`<svg class="ic winbtn" width="10" height="14" viewBox="0 0 10 14"><path d="M1 12.500H9" stroke="#444" stroke-width="2"/></svg>` },
            { c: 1884, w: 14, t: html`<svg class="ic winbtn" width="14" height="14" viewBox="0 0 14 14"><rect x="1" y="4" width="9" height="8" fill="#fff" stroke="#444" stroke-width="1.200"/><path d="M4 4V1H13V9H10" fill="none" stroke="#444" stroke-width="1.200"/></svg>` },
            { c: 1906, w: 14, t: html`<svg class="ic winbtn" width="14" height="14" viewBox="0 0 14 14"><path d="M2 2L12 12M12 2L2 12" stroke="#444" stroke-width="1.800"/></svg>` },
          ])}
        </div>

        <div class="row menu">
          ${row([
            { c: 36, w: 72, t: html`<div class="filetab">文件(F)</div>` },
            { c: 408, w: 54, t: "同步建模" },
            { c: 473, w: 28, t: "编辑" },
            { c: 525, w: 28, t: "分析" },
            { c: 577, w: 28, t: "视图" },
            { c: 642, w: 54, t: "应用模块" },
            { c: 707, w: 28, t: "渲染" },
            { c: 1769.500, w: 125, t: html`<div class="search">查找命令<svg class="ic" width="15" height="15" viewBox="0 0 15 15"><circle cx="9" cy="6" r="4.500" fill="#fff" stroke="#444" stroke-width="1.200"/><path d="M6 9.500L1.500 14" stroke="#444" stroke-width="2"/></svg></div>` },
            { c: 1851, w: 16, t: box(16, 16, svg`<path d="M1 4V1H4M12 1H15V4M15 12V15H12M4 15H1V12" fill="none" stroke="#777"/><rect x="3.500" y="3.500" width="9" height="9" fill="#3c78c8" stroke="#444"/><rect x="3.500" y="3.500" width="9" height="2" fill="#334"/>`) },
            { c: 1878, w: 14, t: box(14, 14, svg`<path d="M1 9L7 3L13 9M1 12L7 6L13 12" fill="none" stroke="#222" stroke-width="1"/>`) },
            { c: 1903, w: 14, t: html`<svg class="ic" width="14" height="14" viewBox="0 0 14 14"><circle cx="7" cy="7" r="6.500" fill="#3c60c8"/><path d="M4.500 5.500Q5 3 7 3Q9.500 3 9.500 5Q9.500 6.500 7.500 7.500V8.500" fill="none" stroke="#fff" stroke-width="1.600"/><circle cx="7.500" cy="10.800" r="1" fill="#fff"/></svg>` },
          ])}
        </div>

        <div class="row ribbon">
          ${ribbon.map(([c, label, icon, line2], i) => {
            const prev = i === 0 ? 0 : ribbon[i - 1][0] + 30;
            return html`<div class="ritem" style="margin-left:${c - 30 - prev}px">
              ${box(32, 32, icon)}<span>${label}</span>${line2 ? html`<span>${line2}</span>` : ""}
            </div>`;
          })}
          <div class="rsep" style="margin-left:${1592 - 1595}px"></div>
          <span class="dd overflow"></span>
        </div>

        <div class="row tools">
          ${row([
            { c: 19, w: 18, t: box(16, 16, svg`<path d="M1 3H14M1 7H10M1 11H12" stroke="#3c6c8c" stroke-width="1.500"/><path d="M9 8L15 13L12 13.500L13 16H11L10.500 14Z" fill="#888"/>`) },
            { c: 48, w: 36, t: html`<span class="t11">菜单(M)</span>` },
            ...tools,
            { c: 461, w: 8, t: dd },
            { c: 573, w: 8, t: dd },
            { c: 617, w: 23, t: html`<div class="sel">${box(22, 20, tb.cube)}</div>` },
            { c: 705, w: 140, t: html`<div class="combo">单条曲线<span class="dd"></span></div>` },
            ...smallRow(toolsB),
            { c: 1211, w: 1, t: sep },
            ...smallRow(toolsC),
            { c: 1374, w: 8, t: dd },
            { c: 1392, w: 22, t: box(20, 20, tb.shade) },
            { c: 1410, w: 8, t: dd },
            { c: 1430, w: 22, t: box(20, 20, tb.cubeB) },
            { c: 1448, w: 8, t: dd },
            { c: 1466, w: 22, t: box(20, 20, tb.play) },
            { c: 1484, w: 8, t: dd },
            { c: 1497, w: 1, t: sep },
          ])}
          <span class="dd overflow"></span>
        </div>

        <div class="work">
          <div class="main">
            <div class="row tabs">
              ${row([
                { c: 31, w: 66, t: html`<div class="tab">${partTab}<span>_mod</span></div>` },
                { c: 456, w: 90, t: html`<div class="tab">${partTab}<span>_model1.prt</span></div>` },
              ])}
            </div>
            <div class="canvas">${this.scene()}</div>
          </div>
          <div class="rail">
            ${rail.map(([gap, b]) => html`<div style="margin-top:${gap}px">${box(24, 24, b)}</div>`)}
          </div>
        </div>

        <div class="row btm">
          ${row([
            { c: 34, w: 48, t: html`<div class="combo" style="color:#1c3c8c;font-size:12px">1<span class="dd"></span></div>` },
            ...smallRow(bottomIcons.slice(0, 8)),
            { c: 276.500, w: 23, t: html`<div class="sel">${box(22, 20, svg`<path d="M5 11V18M5 15L13 11M5 15L13 19" stroke="#c8282c" stroke-width="1.400" fill="none"/><path d="M9 9L15 3L18 5L12 11Z" fill="#1c3cc8"/>`)}</div>` },
            ...smallRow(bottomIcons.slice(8)),
            { c: 367, w: 1, t: sep },
          ])}
          <span class="dd overflow"></span>
        </div>

        <div class="row status">
          ${row([
            { c: 53, w: 100, t: "选择曲线链作为边界" },
            { c: 952, w: 110, t: "边 已选定 - 全部 3" },
            { c: 1838, w: 16, t: box(16, 16, svg`<rect width="16" height="16" fill="#ddd" stroke="#bbb"/><path d="M3 4L13 2V10L3 12Z" fill="#aaa"/><path d="M3 4V15" stroke="#999"/>`) },
            { c: 1857, w: 16, t: box(16, 16, svg`<path d="M1 4V1H4M12 1H15V4M15 12V15H12M4 15H1V12" fill="none" stroke="#999"/><rect x="3.500" y="3.500" width="9" height="9" fill="#7ea0d0" stroke="#666"/>`) },
          ])}
        </div>

        <div class="taskbar">
          <div class="orb"></div>
          <div class="deskrect"></div>
          <div class="task" style="margin-left:122px;width:158px"><div class="dot" style="background:#e8762c"></div></div>
          <div class="task" style="width:159px"><div class="dot" style="background:#d83c5c"></div></div>
          <div class="task" style="margin-left:3px;width:159px"><div class="dot" style="background:#f0dc8c"></div></div>
          <div class="task" style="margin-left:0;width:158px"><div class="dot" style="background:#f0dc8c"></div></div>
          <div class="task" style="width:159px;background:linear-gradient(90deg,#a8ecb0 0,#a8ecb0 68px,#6c9cb8 68px)"><div class="dot" style="background:#28b8d0"></div></div>
          <div class="clock">10:05</div>
          <div class="desk"></div>
        </div>

        <div class="dialog">
          <div class="dtitle">
            <svg class="ic" width="15" height="15" viewBox="0 0 15 15"><circle cx="7.500" cy="7.500" r="4" fill="none" stroke="#fff" stroke-width="2.600"/><path d="M7.500 0v3M7.500 12v3M0 7.500h3M12 7.500h3M2.200 2.200l2 2M10.800 10.800l2 2M12.800 2.200l-2 2M4.200 10.800l-2 2" stroke="#fff" stroke-width="2"/></svg>
            <span class="grow">填充曲面</span>
            <svg class="ic" width="14" height="14" viewBox="0 0 14 14"><path d="M8 2A5.500 5.500 0 1 1 2 6" fill="none" stroke="#fff" stroke-width="1.800"/><path d="M1 2L6 1L5 6Z" fill="#fff"/></svg>
            <svg class="ic" width="13" height="13" viewBox="0 0 13 13"><path d="M1.500 1.500L11.500 11.500M11.500 1.500L1.500 11.500" stroke="#fff" stroke-width="2"/></svg>
          </div>

          <div class="sect">
            <div class="shead"><span>边界</span>${chevron(true)}</div>
            <div class="pick">
              <div class="pickrow">${check}<span>选择曲线 (3)</span></div>
              <div class="pickbtn">
                <svg class="ic" width="26" height="26" viewBox="0 0 26 26">
                  <rect x=".5" y=".5" width="25" height="25" fill="none" stroke="#111" stroke-dasharray="1 1.500"/>
                  <path d="M3 3V21M2 4L14 8M15 3V23" stroke="#2222cc" fill="none"/>
                  <path d="M2 7H12Q21 8 24 23" fill="none" stroke="#d81c1c" stroke-width="1.800"/>
                  <circle cx="19" cy="17" r="3.500" fill="none" stroke="#2222cc"/>
                </svg>
              </div>
            </div>
            <div class="table">
              <div class="cell h">曲线</div><div class="cell h">连续性</div><div class="cell h"></div>
              ${tableRows.map(([a, b], i) => {
                const odd = i % 2 === 1 ? "odd" : "";
                return html`
                  <div class="cell ${odd}">${a ? check : ""}<span>${a}</span></div>
                  <div class="cell ${odd}">${b}</div>
                  <div class="cell ${odd}"></div>`;
              })}
            </div>
          </div>

          <div class="sect">
            <div class="shead"><span>形状控制</span>${chevron(true)}</div>
            <div class="ctrl">
              <span>方法</span>
              <div class="combo">无<span class="dd"></span></div>
            </div>
          </div>

          <div class="sect" style="height:24px">
            <div class="shead" style="height:22px;padding-bottom:0"><span>设置</span>${chevron(false)}</div>
          </div>

          <div class="preview">
            <div class="l">
              <div class="chk"><svg class="ic" width="11" height="11" viewBox="0 0 11 11"><path d="M2 6L4.500 9L9 2" fill="none" stroke="#3c4c9c" stroke-width="1.600"/></svg></div>
              <span>预览</span>
            </div>
            <div class="r">
              <span>显示结果</span>
              <div class="glass"><svg class="ic" width="18" height="18" viewBox="0 0 18 18"><circle cx="7" cy="7" r="5" fill="#f4f8fc" stroke="#666" stroke-width="1.300"/><path d="M11 11L16 16" stroke="#c8a848" stroke-width="2.400"/></svg></div>
            </div>
          </div>

          <div class="btns">
            <div class="btn ok"><span>&lt;</span><span>确定</span><span>&gt;</span></div>
            <div class="btn apply">应用</div>
            <div class="btn">取消</div>
          </div>
        </div>

        <div class="topshadow"></div>
        <svg class="mark" width="74" height="84" viewBox="1636 952 74 84">
          <path d="M1673 953L1709 974L1696 984L1673 966L1650 978L1637 974Z" fill="#cfe8f6" fill-opacity=".95"/>
          <path d="M1687 961L1709 974V1005L1697 1012Q1700 990 1687 961Z" fill="#86d0f0" fill-opacity=".95"/>
          <path d="M1709 1000V1015L1692 1025L1673 1020L1697 1000Z" fill="#7fcdf2" fill-opacity=".95"/>
          <path d="M1653 1009L1673 1020L1696 1022L1673 1035L1653 1023Z" fill="#86d3f6" fill-opacity=".95"/>
          <path d="M1637 974L1645 970Q1660 968 1672 975L1655 990L1653 1022L1637 1015Z" fill="#a8def8" fill-opacity=".95"/>
          <path d="M1673 968L1696 982V1007L1673 1020L1652 1007V982Z" fill="#eef4f8"/>
          <path d="M1674 975L1689 984V1003L1674 1012L1658 1003V984Z" fill="#a9dcf8"/>
          <path d="M1674 993L1689 984V1003L1674 1012Z" fill="#80ccf2"/>
          <path d="M1674 975L1689 984L1674 993L1658 984Z" fill="#c4e6f8"/>
        </svg>
        <div class="marktext">3D世界网</div>
      </div>
    `;
  }
}
